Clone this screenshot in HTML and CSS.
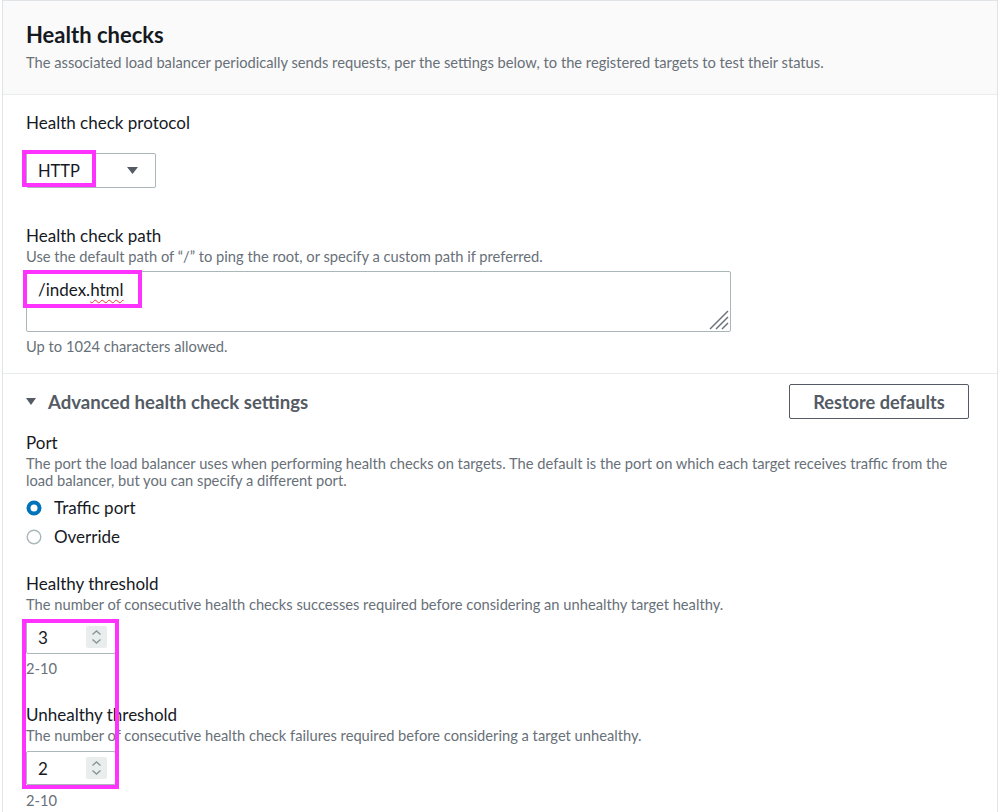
FILE: index.html
```html
<!DOCTYPE html>
<html lang="en">
<head>
<meta charset="utf-8">
<title>Health checks</title>
<link rel="stylesheet" href="styles.css">
</head>
<body>
<div class="card">
  <div class="card-header">
    <h2 class="title">Health checks</h2>
    <p class="desc head-desc">The associated load balancer periodically sends requests, per the settings below, to the registered targets to test their status.</p>
  </div>

  <div class="section">
    <div class="label">Health check protocol</div>
    <div class="hl-wrap select-wrap">
      <div class="select">
        <span>HTTP</span>
        <svg class="caret" width="11" height="7" viewBox="0 0 11 7"><polygon points="0,0 11,0 5.5,7" fill="#545b64"/></svg>
      </div>
      <div class="hl hl-select"></div>
    </div>

    <div class="field">
      <div class="label">Health check path</div>
      <p class="desc">Use the default path of “/” to ping the root, or specify a custom path if preferred.</p>
      <div class="hl-wrap textarea-wrap">
        <div class="textarea">/index.<span class="spell">html</span>
          <svg class="grip" width="22" height="22" viewBox="0 0 22 22">
            <line x1="3" y1="21" x2="21" y2="3" stroke="#687078" stroke-width="1.4"/>
            <line x1="9" y1="21" x2="21" y2="9" stroke="#687078" stroke-width="1.4"/>
            <line x1="15" y1="21" x2="21" y2="15" stroke="#687078" stroke-width="1.4"/>
          </svg>
        </div>
        <div class="hl hl-path"></div>
      </div>
      <p class="desc hint">Up to 1024 characters allowed.</p>
    </div>
  </div>

  <div class="section adv">
    <div class="adv-head">
      <div class="adv-title">
        <svg width="10" height="7" viewBox="0 0 10 7"><polygon points="0,0 10,0 5,7" fill="#545b64"/></svg>
        <span>Advanced health check settings</span>
      </div>
      <button class="btn">Restore defaults</button>
    </div>

    <div class="label port-label">Port</div>
    <p class="desc">The port the load balancer uses when performing health checks on targets. The default is the port on which each target receives traffic from the load balancer, but you can specify a different port.</p>
    <div class="radios">
      <div class="radio">
        <svg width="16" height="16" viewBox="0 0 16 16"><circle cx="8" cy="8" r="5.5" fill="#fff" stroke="#0073bb" stroke-width="4"/></svg>
        <span>Traffic port</span>
      </div>
      <div class="radio">
        <svg width="16" height="16" viewBox="0 0 16 16"><circle cx="8" cy="8" r="6.8" fill="#fff" stroke="#aab7b8" stroke-width="1.4"/></svg>
        <span>Override</span>
      </div>
    </div>

    <div class="hl-wrap thresholds">
      <div class="label">Healthy threshold</div>
      <p class="desc">The number of consecutive health checks successes required before considering an unhealthy target healthy.</p>
      <div class="num">
        <span>3</span>
        <svg class="spin" width="21" height="22" viewBox="0 0 21 22"><rect width="21" height="22" rx="2" fill="#eaeded"/><path d="M6.5 8.5 L10.5 5 L14.5 8.5" fill="none" stroke="#879596" stroke-width="1.4"/><path d="M6.5 13.5 L10.5 17 L14.5 13.5" fill="none" stroke="#879596" stroke-width="1.4"/></svg>
      </div>
      <p class="desc hint">2-10</p>

      <div class="label unhealthy">Unhealthy threshold</div>
      <p class="desc">The number of consecutive health check failures required before considering a target unhealthy.</p>
      <div class="num">
        <span>2</span>
        <svg class="spin" width="21" height="22" viewBox="0 0 21 22"><rect width="21" height="22" rx="2" fill="#eaeded"/><path d="M6.5 8.5 L10.5 5 L14.5 8.5" fill="none" stroke="#879596" stroke-width="1.4"/><path d="M6.5 13.5 L10.5 17 L14.5 13.5" fill="none" stroke="#879596" stroke-width="1.4"/></svg>
      </div>
      <p class="desc hint last-hint">2-10</p>
      <div class="hl hl-thresh"></div>
    </div>
  </div>
</div>
</body>
</html>
```

FILE: styles.css
```css
* { box-sizing: border-box; }
html, body { margin: 0; padding: 0; background: #fff; }
body {
  font-family: Lato, "Noto Sans", sans-serif;
  color: #16191f;
  overflow: hidden;
}
.card {
  margin: 0 2px;
  border: 1px solid #e1e4e6;
  border-bottom: none;
  min-height: 812px;
}
.card-header {
  background: #fafafa;
  padding: 20px 28px 23px 23px;
  border-bottom: 1px solid #eaeded;
}
.title {
  margin: 0;
  font-size: 22px;
  line-height: 28px;
  font-weight: 700;
}
.desc {
  margin: 1px 0 0;
  font-size: 14.7px;
  line-height: 17px;
  color: #687078;
}
.head-desc { margin-top: 5px; }
.section {
  padding: 17px 28px 18px 23px;
  border-bottom: 1px solid #eaeded;
}
.label {
  font-size: 17px;
  line-height: 22px;
}
.hl-wrap { position: relative; }
.hl {
  position: absolute;
  border: 4px solid #ff33ff;
  pointer-events: none;
}
.select-wrap { margin-top: 19px; width: 130px; }
.select {
  height: 35px;
  border: 1px solid #aab7b8;
  border-radius: 2px;
  display: flex;
  align-items: center;
  justify-content: space-between;
  padding: 0 17px 0 11px;
  font-size: 16.5px;
}
.hl-select { left: -4px; top: -3px; width: 74px; height: 37px; }
.field { margin-top: 37px; }
.textarea-wrap { margin-top: 6px; width: 705px; }
.textarea {
  position: relative;
  height: 61px;
  border: 1px solid #aab7b8;
  border-radius: 2px;
  padding: 7px 11px;
  font-size: 17px;
  line-height: 22px;
}
.spell {
  text-decoration: underline wavy #e3342f;
  text-decoration-thickness: 1px;
  text-underline-offset: 3px;
}
.grip { position: absolute; right: 1px; bottom: 1px; }
.hl-path { left: -3px; top: -1px; width: 119px; height: 38px; }
.hint { margin-top: 6px; }
.adv { border-bottom: none; padding-top: 10px; }
.adv-head {
  display: flex;
  justify-content: space-between;
  align-items: center;
}
.adv-title {
  display: flex;
  align-items: center;
  gap: 12px;
  font-size: 18.6px;
  font-weight: 700;
  color: #545b64;
}
.btn {
  width: 180px;
  height: 35px;
  border: 1px solid #545b64;
  border-radius: 2px;
  background: #fff;
  font-family: inherit;
  font-size: 18.2px;
  font-weight: 700;
  color: #545b64;
  padding: 0;
}
.port-label { margin-top: 13px; }
.radios {
  margin-top: 8px;
  display: flex;
  flex-direction: column;
  gap: 7px;
}
.radio {
  display: flex;
  align-items: center;
  gap: 12px;
  font-size: 17px;
  line-height: 22px;
}
.thresholds { margin-top: 25px; }
.num {
  margin-top: 7px;
  width: 90px;
  height: 34px;
  border: 1px solid #aab7b8;
  border-radius: 2px;
  display: flex;
  align-items: center;
  justify-content: space-between;
  padding: 0 8px 0 11px;
  font-size: 17px;
}
.hint + .unhealthy { margin-top: 27px; }
.last-hint { margin-top: 7px; }
.hl-thresh { left: -4px; top: 46px; width: 97px; height: 170px; }
```
